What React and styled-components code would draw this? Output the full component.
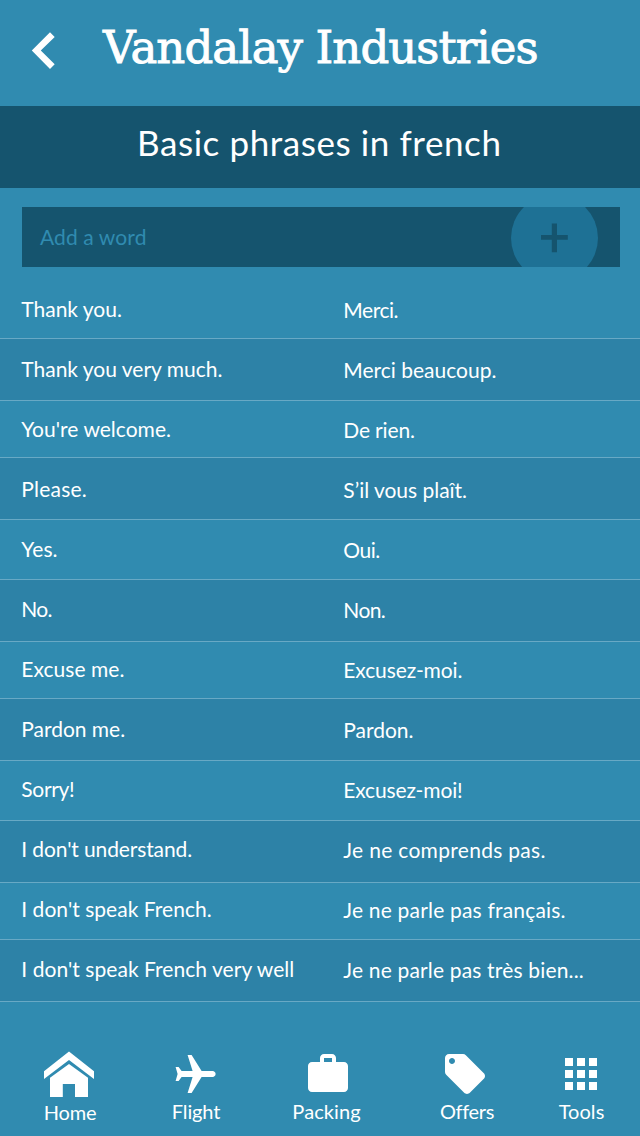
import React from 'react';
import styled, { createGlobalStyle } from 'styled-components';

const GlobalStyle = createGlobalStyle`
  *, *::before, *::after { box-sizing: border-box; }
  body { margin: 0; background: #308bb0; }
`;

const Screen = styled.div`
  display: flex;
  flex-direction: column;
  width: 640px;
  height: 1136px;
  overflow: hidden;
  background: #308bb0;
  color: #fff;
  font: 400 21px/26px Lato, "Liberation Sans", sans-serif;
  white-space: nowrap;
`;

const Header = styled.header`
  display: flex;
  align-items: flex-start;
  height: 106px;
  padding: 18px 0 0 31px;
`;

const BackIcon = styled.svg`
  flex: none;
  width: 25px;
  height: 38px;
  margin-top: 13px;
  fill: #fff;
`;

const Title = styled.h1`
  margin: 0 0 0 47px;
  font: 400 45px/60px "DejaVu Serif", serif;
  letter-spacing: -0.92px;
  -webkit-text-stroke: 0.9px #fff;
`;

const SubHeader = styled.h2`
  height: 82px;
  margin: 0;
  padding: 16px 0 0 137px;
  background: #15546e;
  font-size: 35px;
  font-weight: 400;
  line-height: 41px;
  letter-spacing: 0.58px;
`;

const AddBar = styled.div`
  display: flex;
  justify-content: space-between;
  height: 60px;
  margin: 19px 20px 10px 22px;
  padding: 0 22px 0 18px;
  overflow: hidden;
  background: #15546e;
`;

const Placeholder = styled.span`
  padding-top: 17px;
  color: #308bb0;
  letter-spacing: 0.1px;
`;

const AddButton = styled.svg`
  width: 87px;
  height: 60px;
`;

const PhraseRow = styled.div`
  display: grid;
  grid-template-columns: 322px 1fr;
  align-items: start;
  flex: none;
  height: ${(p) => p.$height}px;
  padding: ${(p) => p.$top}px 0 0 21.3px;
  border-bottom: 1px solid #68a9c5;
  background: ${(p) => (p.$shaded ? '#2d82a7' : '#308bb0')};
`;

const Phrase = styled.span`
  padding-top: ${(p) => (p.$translated ? 1 : 0)}px;
  letter-spacing: ${(p) => p.$spacing}px;
`;

const TabBar = styled.nav`
  display: grid;
  grid-template-columns: 130px 124px 140px 134px 98px;
  flex: 1;
  padding: 48px 0 0 4px;
  font-size: 20px;
  line-height: 24px;
`;

const Tab = styled.div`
  display: flex;
  flex-direction: column;
  align-items: center;
`;

const TabIcon = styled.svg`
  flex: none;
  width: ${(p) => p.$width || 48}px;
  height: 48px;
  fill: #fff;
`;

const TabLabel = styled.span`
  margin: ${(p) => p.$top || 1}px ${(p) => p.$right || 0}px 0 ${(p) => p.$left || 0}px;
  letter-spacing: ${(p) => p.$spacing}px;
`;

const phrases = [
  ['Thank you.', -0.01, 'Merci.', -0.45, 62, 19],
  ['Thank you very much.', -0.01, 'Merci beaucoup.', 0, 62, 17],
  ["You're welcome.", 0.02, 'De rien.', -0.16, 57, 15],
  ['Please.', 0.22, 'S’il vous plaît.', -0.02, 62, 18],
  ['Yes.', 0.1, 'Oui.', -0.5, 60, 16],
  ['No.', -0.7, 'Non.', -0.6, 62, 16],
  ['Excuse me.', 0.05, 'Excusez-moi.', -0.11, 57, 14],
  ['Pardon me.', -0.02, 'Pardon.', -0.03, 62, 17],
  ['Sorry!', -0.31, 'Excusez-moi!', -0.15, 60, 15],
  ["I don't understand.", -0.12, 'Je ne comprends pas.', 0.3, 62, 15],
  ["I don't speak French.", 0.03, 'Je ne parle pas français.', 0.19, 57, 13],
  ["I don't speak French very well", 0.05, 'Je ne parle pas très bien...', 0.17, 62, 16],
];

export default function App() {
  return (
    <Screen>
      <GlobalStyle />
      <Header>
        <BackIcon viewBox="0 0 25 38">
          <path d="M19 1.3 23.7 6 9.8 19.6 23.7 33.2 19 37.9.8 19.6Z" />
        </BackIcon>
        <Title>Vandalay Industries</Title>
      </Header>
      <SubHeader>Basic phrases in french</SubHeader>
      <AddBar>
        <Placeholder>Add a word</Placeholder>
        <AddButton viewBox="0 0 87 60">
          <circle cx="43.5" cy="31" r="43.5" fill="#1e7195" />
          <path d="M40.8 16.5h5.2v11.6h10.8v4.7H46v12.4h-5.2V32.8H30v-4.7h10.8z" fill="#15546e" />
        </AddButton>
      </AddBar>
      {phrases.map(([english, enSpacing, french, frSpacing, height, top], i) => (
        <PhraseRow key={english} $height={height} $top={top} $shaded={i % 2 === 1}>
          <Phrase $spacing={enSpacing}>{english}</Phrase>
          <Phrase $translated $spacing={frSpacing}>{french}</Phrase>
        </PhraseRow>
      ))}
      <TabBar>
        <Tab>
          <TabIcon $width={50} viewBox="0 0 50 48">
            <path d="M25 1.5 50 21.3V29L25 10 0 29V21.3Z" />
            <path d="M25 14 44 27.8V47H31V34H18.8V47H6V27.8Z" />
          </TabIcon>
          <TabLabel $top={2} $left={2} $spacing={-0.15}>Home</TabLabel>
        </Tab>
        <Tab>
          <TabIcon viewBox="0 0 24 24">
            <path
              transform="translate(-0.2 0.5) rotate(90 12 12)"
              d="M21 16v-2l-8-5V3.5c0-.83-.67-1.5-1.5-1.5S10 2.67 10 3.5V9l-8 5v2l8-2.5V19l-2 1.5V22l3.5-1 3.5 1v-1.5L13 19v-5.5l8 2.5z"
            />
          </TabIcon>
          <TabLabel $spacing={-0.15}>Flight</TabLabel>
        </Tab>
        <Tab>
          <TabIcon viewBox="0 0 24 24">
            <path d="M20 6h-4V4c0-1.11-.89-2-2-2h-4c-1.11 0-2 .89-2 2v2H4c-1.11 0-2 .89-2 2v11c0 1.11.89 2 2 2h16c1.11 0 2-.89 2-2V8c0-1.11-.89-2-2-2zm-6 0h-4V4h4v2z" />
          </TabIcon>
          <TabLabel $right={3} $spacing={0.08}>Packing</TabLabel>
        </Tab>
        <Tab>
          <TabIcon viewBox="0 0 24 24">
            <path d="M21.41 11.58l-9-9C12.05 2.22 11.55 2 11 2H4c-1.1 0-2 .9-2 2v7c0 .55.22 1.05.59 1.42l9 9c.36.36.86.58 1.41.58.55 0 1.05-.22 1.41-.59l7-7c.37-.36.59-.86.59-1.41 0-.55-.23-1.06-.59-1.42zM5.5 7C4.67 7 4 6.33 4 5.5S4.67 4 5.5 4 7 4.67 7 5.5 6.33 7 5.5 7z" />
          </TabIcon>
          <TabLabel $left={4} $spacing={-0.34}>Offers</TabLabel>
        </Tab>
        <Tab>
          <TabIcon viewBox="0 0 24 24">
            <path d="M4 8h4V4H4v4zm6 12h4v-4h-4v4zm-6 0h4v-4H4v4zm0-6h4v-4H4v4zm6 0h4v-4h-4v4zm6-10v4h4V4h-4zm-6 4h4V4h-4v4zm6 6h4v-4h-4v4zm0 6h4v-4h-4v4z" />
          </TabIcon>
          <TabLabel $left={1} $spacing={0.06}>Tools</TabLabel>
        </Tab>
      </TabBar>
    </Screen>
  );
}
